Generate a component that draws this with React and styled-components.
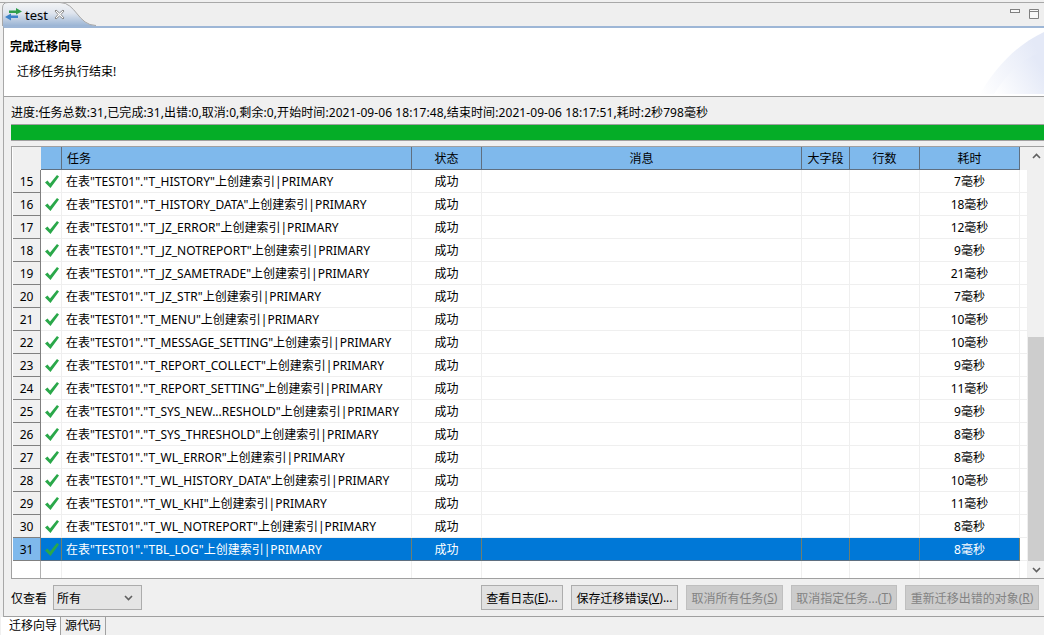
import React from 'react';
import styled, { createGlobalStyle } from 'styled-components';

const GlobalStyle = createGlobalStyle`
    html, body { margin: 0; padding: 0; background: #f0f0f0; overflow: hidden; }
    body { font-family: "Noto Sans", "Noto Sans CJK SC", sans-serif; font-size: 12px; color: #000; }
`;

const COLUMNS = '28px 21px 350px 70px 320px 48px 70px 100px 8px';

const Page = styled.div`
    width: 1044px;
    height: 635px;
    display: flex;
    flex-direction: column;
    overflow: hidden;
`;

const TabStrip = styled.div`
    height: 23px;
    margin-top: 2px;
    border-top: 1px solid #a8a8a8;
    background: #efefef;
    display: flex;
    justify-content: space-between;
`;

const EditorTab = styled.div`
    position: relative;
    width: 94px;
    margin-left: 2px;
    height: 23px;
    display: flex;
    align-items: center;
    padding-left: 3px;
    box-sizing: border-box;
    font-size: 13px;
`;

const TabShape = styled.svg`
    position: absolute;
    left: 0;
    top: -1px;
    z-index: 0;
`;

const TabContent = styled.div`
    position: relative;
    z-index: 1;
    display: flex;
    align-items: center;
    gap: 3px;
`;

const CloseButton = styled.span`
    display: flex;
    margin-left: 3px;
`;

const WindowButtons = styled.div`
    display: flex;
    gap: 9px;
    padding: 6px 5px 0 0;
`;

const Main = styled.div`
    flex: 1;
    display: flex;
    flex-direction: column;
    border-top: 2px solid #9db6d6;
    border-left: 1px solid #a8a8a8;
    margin-left: 3px;
    min-height: 0;
`;

const Banner = styled.div`
    position: relative;
    height: 69px;
    flex-shrink: 0;
    background: #fff;
    border-bottom: 1px solid #a0a0a0;
    padding: 10px 0 0 6px;
    box-sizing: border-box;
`;

const BannerArt = styled.svg`
    position: absolute;
    right: 0;
    top: 0;
`;

const Title = styled.div`
    font-weight: 700;
    line-height: 18px;
`;

const Description = styled.div`
    margin: 7px 0 0 7px;
    line-height: 18px;
`;

const ProgressText = styled.div`
    margin: 7px 0 0 7px;
    height: 18px;
    line-height: 18px;
    white-space: nowrap;
    letter-spacing: 0.08px;
`;

const ProgressBar = styled.div`
    height: 15px;
    flex-shrink: 0;
    margin: 2px 0 0 7px;
    background: #05ad27;
    border-top: 1px solid #a0a0a0;
    border-bottom: 1px solid #a0a0a0;
`;

const TableBox = styled.div`
    height: 433px;
    flex-shrink: 0;
    margin: 5px 0 0 7px;
    border: 1px solid #a0a0a0;
    border-right: none;
    padding-left: 1px;
    box-sizing: border-box;
    background: #fff;
    display: flex;
    overflow: hidden;
`;

const TableBody = styled.div`
    width: 1015px;
    flex-shrink: 0;
    display: flex;
    flex-direction: column;
`;

const HeaderRow = styled.div`
    display: grid;
    grid-template-columns: ${COLUMNS};
    height: 23px;
    flex-shrink: 0;
`;

const HeaderCell = styled.div`
    background: #7fb9ec;
    border-right: 1px solid #5f6f80;
    border-bottom: 1px solid #5f6f80;
    box-sizing: border-box;
    display: flex;
    align-items: center;
    justify-content: ${p => (p.$left ? 'flex-start' : 'center')};
    padding-left: ${p => (p.$left ? '5px' : '0')};
`;

const Corner = styled.div`
    background: #f0f0f0;
`;

const Row = styled.div`
    display: grid;
    grid-template-columns: ${COLUMNS};
    height: 23px;
    flex-shrink: 0;
    color: ${p => (p.$selected ? '#fff' : '#000')};
`;

const RowHeader = styled.div`
    background: ${p => (p.$selected ? '#7fb9ec' : '#f0f0f0')};
    color: #000;
    border-right: 1px solid #808080;
    border-bottom: 1px solid #808080;
    box-sizing: border-box;
    display: flex;
    align-items: center;
    justify-content: center;
`;

const EmptyRowHeader = styled.div`
    background: #fff;
    border-right: 1px solid #b0b0b0;
`;

const Cell = styled.div`
    background: ${p => (p.$selected ? '#0078d7' : '#fff')};
    border-right: 1px solid ${p => (p.$selected ? '#6f7f6f' : '#efefef')};
    border-bottom: 1px solid ${p => (p.$selected ? '#5f6f80' : '#efefef')};
    box-sizing: border-box;
    display: flex;
    align-items: center;
    justify-content: ${p => (p.$left ? 'flex-start' : 'center')};
    padding-left: ${p => (p.$left ? '4px' : '0')};
    white-space: nowrap;
    overflow: hidden;
`;

const IconCell = styled(Cell)`
    padding-left: 2px;
`;

const Scrollbar = styled.div`
    width: 17px;
    flex-shrink: 0;
    background: #f0f0f0;
    display: flex;
    flex-direction: column;
`;

const ScrollButton = styled.div`
    height: 17px;
    display: flex;
    align-items: center;
    justify-content: center;
`;

const ScrollTrack = styled.div`
    flex: 1;
    display: flex;
    flex-direction: column;
    justify-content: flex-end;
`;

const ScrollThumb = styled.div`
    height: 224px;
    background: #cdcdcd;
`;

const Footer = styled.div`
    height: 38px;
    flex-shrink: 0;
    display: flex;
    align-items: center;
    padding: 0 5px 0 7px;
    border-bottom: 1px solid #a0a0a0;
    box-sizing: border-box;
`;

const Label = styled.span`
    width: 42px;
`;

const Select = styled.div`
    width: 89px;
    height: 25px;
    box-sizing: border-box;
    border: 1px solid #acacac;
    background: #e5e5e5;
    display: flex;
    align-items: center;
    justify-content: space-between;
    padding: 0 8px 0 3px;
`;

const Buttons = styled.div`
    margin-left: auto;
    display: flex;
    gap: 8px;
`;

const Button = styled.div`
    width: ${p => p.$width}px;
    height: 25px;
    box-sizing: border-box;
    border: 1px solid ${p => (p.disabled ? '#bfbfbf' : '#adadad')};
    background: ${p => (p.disabled ? '#cccccc' : '#e1e1e1')};
    color: ${p => (p.disabled ? '#838383' : '#000')};
    display: flex;
    align-items: center;
    justify-content: center;
    white-space: nowrap;
`;

const Underline = styled.span`
    text-decoration: underline;
`;

const BottomTabs = styled.div`
    display: flex;
    flex: 1;
    margin-left: -3px;
`;

const BottomTab = styled.div`
    padding: 0 ${p => (p.$active ? '3px 0 8px' : '4px')};
    background: ${p => (p.$active ? '#fff' : '#f0f0f0')};
    border-right: 1px solid #a0a0a0;
    line-height: 18px;
    height: 19px;
`;

const tasks = [
    [15, 'T_HISTORY', '7'],
    [16, 'T_HISTORY_DATA', '18'],
    [17, 'T_JZ_ERROR', '12'],
    [18, 'T_JZ_NOTREPORT', '9'],
    [19, 'T_JZ_SAMETRADE', '21'],
    [20, 'T_JZ_STR', '7'],
    [21, 'T_MENU', '10'],
    [22, 'T_MESSAGE_SETTING', '10'],
    [23, 'T_REPORT_COLLECT', '9'],
    [24, 'T_REPORT_SETTING', '11'],
    [25, 'T_SYS_NEW...RESHOLD', '9'],
    [26, 'T_SYS_THRESHOLD', '8'],
    [27, 'T_WL_ERROR', '8'],
    [28, 'T_WL_HISTORY_DATA', '10'],
    [29, 'T_WL_KHI', '11'],
    [30, 'T_WL_NOTREPORT', '8'],
    [31, 'TBL_LOG', '8'],
];

const SyncIcon = () => (
    <svg width="17" height="13" viewBox="0 0 17 13">
        <path d="M4 2.500h7V0l6 3.500-6 3V5H4z" fill="#2e9e4a" />
        <path d="M13 7.500H6V5.500L0 9l6 3.500V10h7z" fill="#3c82c8" />
    </svg>
);

const CloseIcon = () => (
    <svg width="11" height="11" viewBox="0 0 11 11">
        <path d="M2 1l3.500 3L9 1l1 1-3 3.500L10 9 9 10 5.500 7 2 10 1 9l3-3.500L1 2z" fill="#fff" stroke="#8a8a8a" />
    </svg>
);

const CheckIcon = () => (
    <svg width="16" height="15" viewBox="0 0 16 15">
        <path d="M1 8.500l2.500-2L6 9.500 13 1l2 1.500L6.500 14z" fill="#2aa84a" />
    </svg>
);

const Chevron = ({ up }) => (
    <svg width="9" height="6" viewBox="0 0 9 6">
        <path d={up ? 'M1 5l3.500-3.500L8 5' : 'M1 1l3.500 3.500L8 1'} fill="none" stroke="#606060" strokeWidth="1.600" />
    </svg>
);

const App = () => (
    <Page>
        <GlobalStyle />
        <TabStrip>
            <EditorTab>
                <TabShape width="94" height="24" viewBox="0 0 94 24">
                    <defs>
                        <linearGradient id="tab" x1="0" y1="0" x2="0" y2="1">
                            <stop offset="0" stopColor="#f3f4f6" />
                            <stop offset="0.45" stopColor="#dfe5ee" />
                            <stop offset="1" stopColor="#9ab4d4" />
                        </linearGradient>
                    </defs>
                    <path d="M.5 24V6Q.5 .5 6 .5H58C74 .5 76 23.500 94 23.500V24Z" fill="url(#tab)" />
                    <path d="M.5 24V6Q.5 .5 6 .5H58C74 .5 76 23.500 94 23.500" fill="none" stroke="#a8a8a8" />
                </TabShape>
                <TabContent>
                    <SyncIcon />
                    <span>test</span>
                    <CloseButton><CloseIcon /></CloseButton>
                </TabContent>
            </EditorTab>
            <WindowButtons>
                <svg width="10" height="4" viewBox="0 0 10 4"><rect x=".5" y=".5" width="9" height="3" fill="#f8f8f8" stroke="#808080" /></svg>
                <svg width="10" height="10" viewBox="0 0 10 10"><path d="M.5.5h9v9h-9zM.5 2.500h9" fill="#f8f8f8" stroke="#808080" /></svg>
            </WindowButtons>
        </TabStrip>
        <Main>
            <Banner>
                <BannerArt width="64" height="66" viewBox="0 0 64 66">
                    <defs>
                        <linearGradient id="art" x1="0" y1="1" x2="1" y2="0.500">
                            <stop offset="0" stopColor="#fff" />
                            <stop offset="1" stopColor="#e4e9f7" />
                        </linearGradient>
                    </defs>
                    <path d="M0 66C14 42 34 18 64 4v62z" fill="url(#art)" />
                    <path d="M14 66C28 44 44 28 64 24v42z" fill="url(#art)" />
                </BannerArt>
                <Title>完成迁移向导</Title>
                <Description>迁移任务执行结束!</Description>
            </Banner>
            <ProgressText>进度:任务总数:31,已完成:31,出错:0,取消:0,剩余:0,开始时间:2021-09-06 18:17:48,结束时间:2021-09-06 18:17:51,耗时:2秒798毫秒</ProgressText>
            <ProgressBar />
            <TableBox>
                <TableBody>
                    <HeaderRow>
                        <Corner />
                        <HeaderCell />
                        <HeaderCell $left>任务</HeaderCell>
                        <HeaderCell>状态</HeaderCell>
                        <HeaderCell>消息</HeaderCell>
                        <HeaderCell>大字段</HeaderCell>
                        <HeaderCell>行数</HeaderCell>
                        <HeaderCell>耗时</HeaderCell>
                        <Corner />
                    </HeaderRow>
                    {tasks.map(([no, name, ms]) => {
                        const selected = no === 31;
                        return (
                            <Row key={no} $selected={selected}>
                                <RowHeader $selected={selected}>{no}</RowHeader>
                                <IconCell $selected={selected}><CheckIcon /></IconCell>
                                <Cell $left $selected={selected}>在表"TEST01"."{name}"上创建索引|PRIMARY</Cell>
                                <Cell $selected={selected}>成功</Cell>
                                <Cell $selected={selected} />
                                <Cell $selected={selected} />
                                <Cell $selected={selected} />
                                <Cell $selected={selected}>{ms}毫秒</Cell>
                                <Cell />
                            </Row>
                        );
                    })}
                    <Row>
                        <EmptyRowHeader />
                        <Cell /><Cell /><Cell /><Cell /><Cell /><Cell /><Cell /><Cell />
                    </Row>
                </TableBody>
                <Scrollbar>
                    <ScrollButton><Chevron up /></ScrollButton>
                    <ScrollTrack><ScrollThumb /></ScrollTrack>
                    <ScrollButton><Chevron /></ScrollButton>
                </Scrollbar>
            </TableBox>
            <Footer>
                <Label>仅查看</Label>
                <Select>
                    <span>所有</span>
                    <Chevron />
                </Select>
                <Buttons>
                    <Button $width={82}>查看日志(<Underline>E</Underline>)...</Button>
                    <Button $width={107}>保存迁移错误(<Underline>V</Underline>)...</Button>
                    <Button $width={97} disabled>取消所有任务(<Underline>S</Underline>)</Button>
                    <Button $width={106} disabled>取消指定任务...(<Underline>T</Underline>)</Button>
                    <Button $width={134} disabled>重新迁移出错的对象(<Underline>R</Underline>)</Button>
                </Buttons>
            </Footer>
            <BottomTabs>
                <BottomTab $active>迁移向导</BottomTab>
                <BottomTab>源代码</BottomTab>
            </BottomTabs>
        </Main>
    </Page>
);

export default App;
